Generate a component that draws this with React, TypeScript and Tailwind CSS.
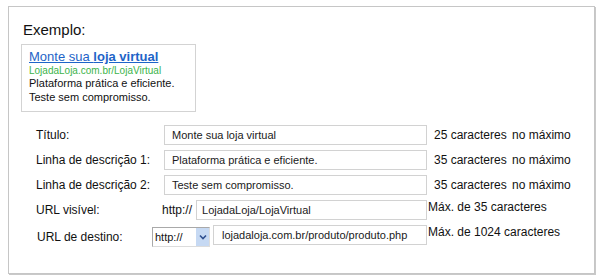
import React from "react";

function Field({ children, pl = "pl-[7px]" }: { children: React.ReactNode; pl?: string }) {
  return (
    <div className={`flex-1 h-[20px] border border-[#d2d2d2] bg-white flex items-center ${pl} text-[11px] leading-[20px] text-[#1a1a1a] whitespace-nowrap overflow-hidden`}>
      {children}
    </div>
  );
}

function Label({ children }: { children: React.ReactNode }) {
  return <div className="w-[131px] pl-[15px] text-[12px] leading-[20px] whitespace-nowrap">{children}</div>;
}

function Limit({ n }: { n: string }) {
  return (
    <div className="ml-[7px] text-[12px] leading-[20px] whitespace-nowrap">
      {n} caracteres <span className="ml-[2px]">no máximo</span>
    </div>
  );
}

export default function App() {
  return (
    <div className="w-[600px] h-[280px] bg-white pt-[6px] pl-[8px] font-['Liberation_Sans',Arial,sans-serif] text-[#111]">
      <div className="w-[587px] h-[268px] border border-[#c6c6c6] shadow-[1px_1px_0_#c9c9c9] pl-[12px] pt-[14px]">
        <div className="ml-[2px] text-[15px] leading-[17px]">Exemplo:</div>
        <div className="mt-[6px] w-[175px] h-[68px] border border-[#d3d3d3] pl-[7px] pt-[4px]">
          <div className="text-[13px] leading-[15px] text-[#1e64c8] underline whitespace-nowrap">
            Monte sua <span className="font-bold">loja virtual</span>
          </div>
          <div className="mt-[1px] text-[10px] leading-[11px] text-[#3bb44a] whitespace-nowrap">LojadaLoja.com.br/LojaVirtual</div>
          <div className="text-[11px] leading-[14px] whitespace-nowrap">Plataforma prática e eficiente.</div>
          <div className="text-[11px] leading-[14px] whitespace-nowrap">Teste sem compromisso.</div>
        </div>

        <div className="mt-[13px] flex flex-col">
          <div className="h-[25px] flex items-start">
            <Label>Título:</Label>
            <div className="w-[275px] pl-[12px] flex">
              <Field>Monte sua loja virtual</Field>
            </div>
            <Limit n="25" />
          </div>
          <div className="h-[25px] flex items-start">
            <Label>Linha de descrição 1:</Label>
            <div className="w-[275px] pl-[12px] flex">
              <Field>Plataforma prática e eficiente.</Field>
            </div>
            <Limit n="35" />
          </div>
          <div className="h-[25px] flex items-start">
            <Label>Linha de descrição 2:</Label>
            <div className="w-[275px] pl-[12px] flex">
              <Field>Teste sem compromisso.</Field>
            </div>
            <Limit n="35" />
          </div>
          <div className="h-[25px] flex items-start">
            <Label>URL visível:</Label>
            <div className="w-[275px] pl-[10px] flex items-center">
              <span className="text-[12px] leading-[20px]">http://</span>
              <div className="ml-[4px] flex-1 flex">
                <Field pl="pl-[5px]">LojadaLoja/LojaVirtual</Field>
              </div>
            </div>
            <div className="ml-[1px] -mt-[3px] text-[12px] leading-[20px] whitespace-nowrap">Máx. de 35 caracteres</div>
          </div>
          <div className="h-[25px] flex items-start">
            <div className="w-[131px] pl-[16px] pt-[2px] text-[12px] leading-[20px] whitespace-nowrap">URL de destino:</div>
            <div className="w-[275px] flex items-start">
              <div className="mt-[2px] w-[58px] h-[20px] border border-[#a9a9a9] border-b-[#dcdcdc] border-r-[#dcdcdc] flex items-center justify-between bg-white">
                <span className="pl-[2px] text-[11px] leading-[18px]">http://</span>
                <div className="w-[13px] h-full bg-[#c6d9f3] flex items-center justify-center">
                  <svg width="8" height="6" viewBox="0 0 8 6">
                    <path d="M1 1.5 L4 4.5 L7 1.5" fill="none" stroke="#2f4f8f" strokeWidth="1.6" />
                  </svg>
                </div>
              </div>
              <div className="ml-[3px] flex-1 flex">
                <Field pl="pl-[8px]">lojadaloja.com.br/produto/produto.php</Field>
              </div>
            </div>
            <div className="ml-[1px] -mt-[3px] text-[12px] leading-[20px] whitespace-nowrap">Máx. de 1024 caracteres</div>
          </div>
        </div>
      </div>
    </div>
  );
}
